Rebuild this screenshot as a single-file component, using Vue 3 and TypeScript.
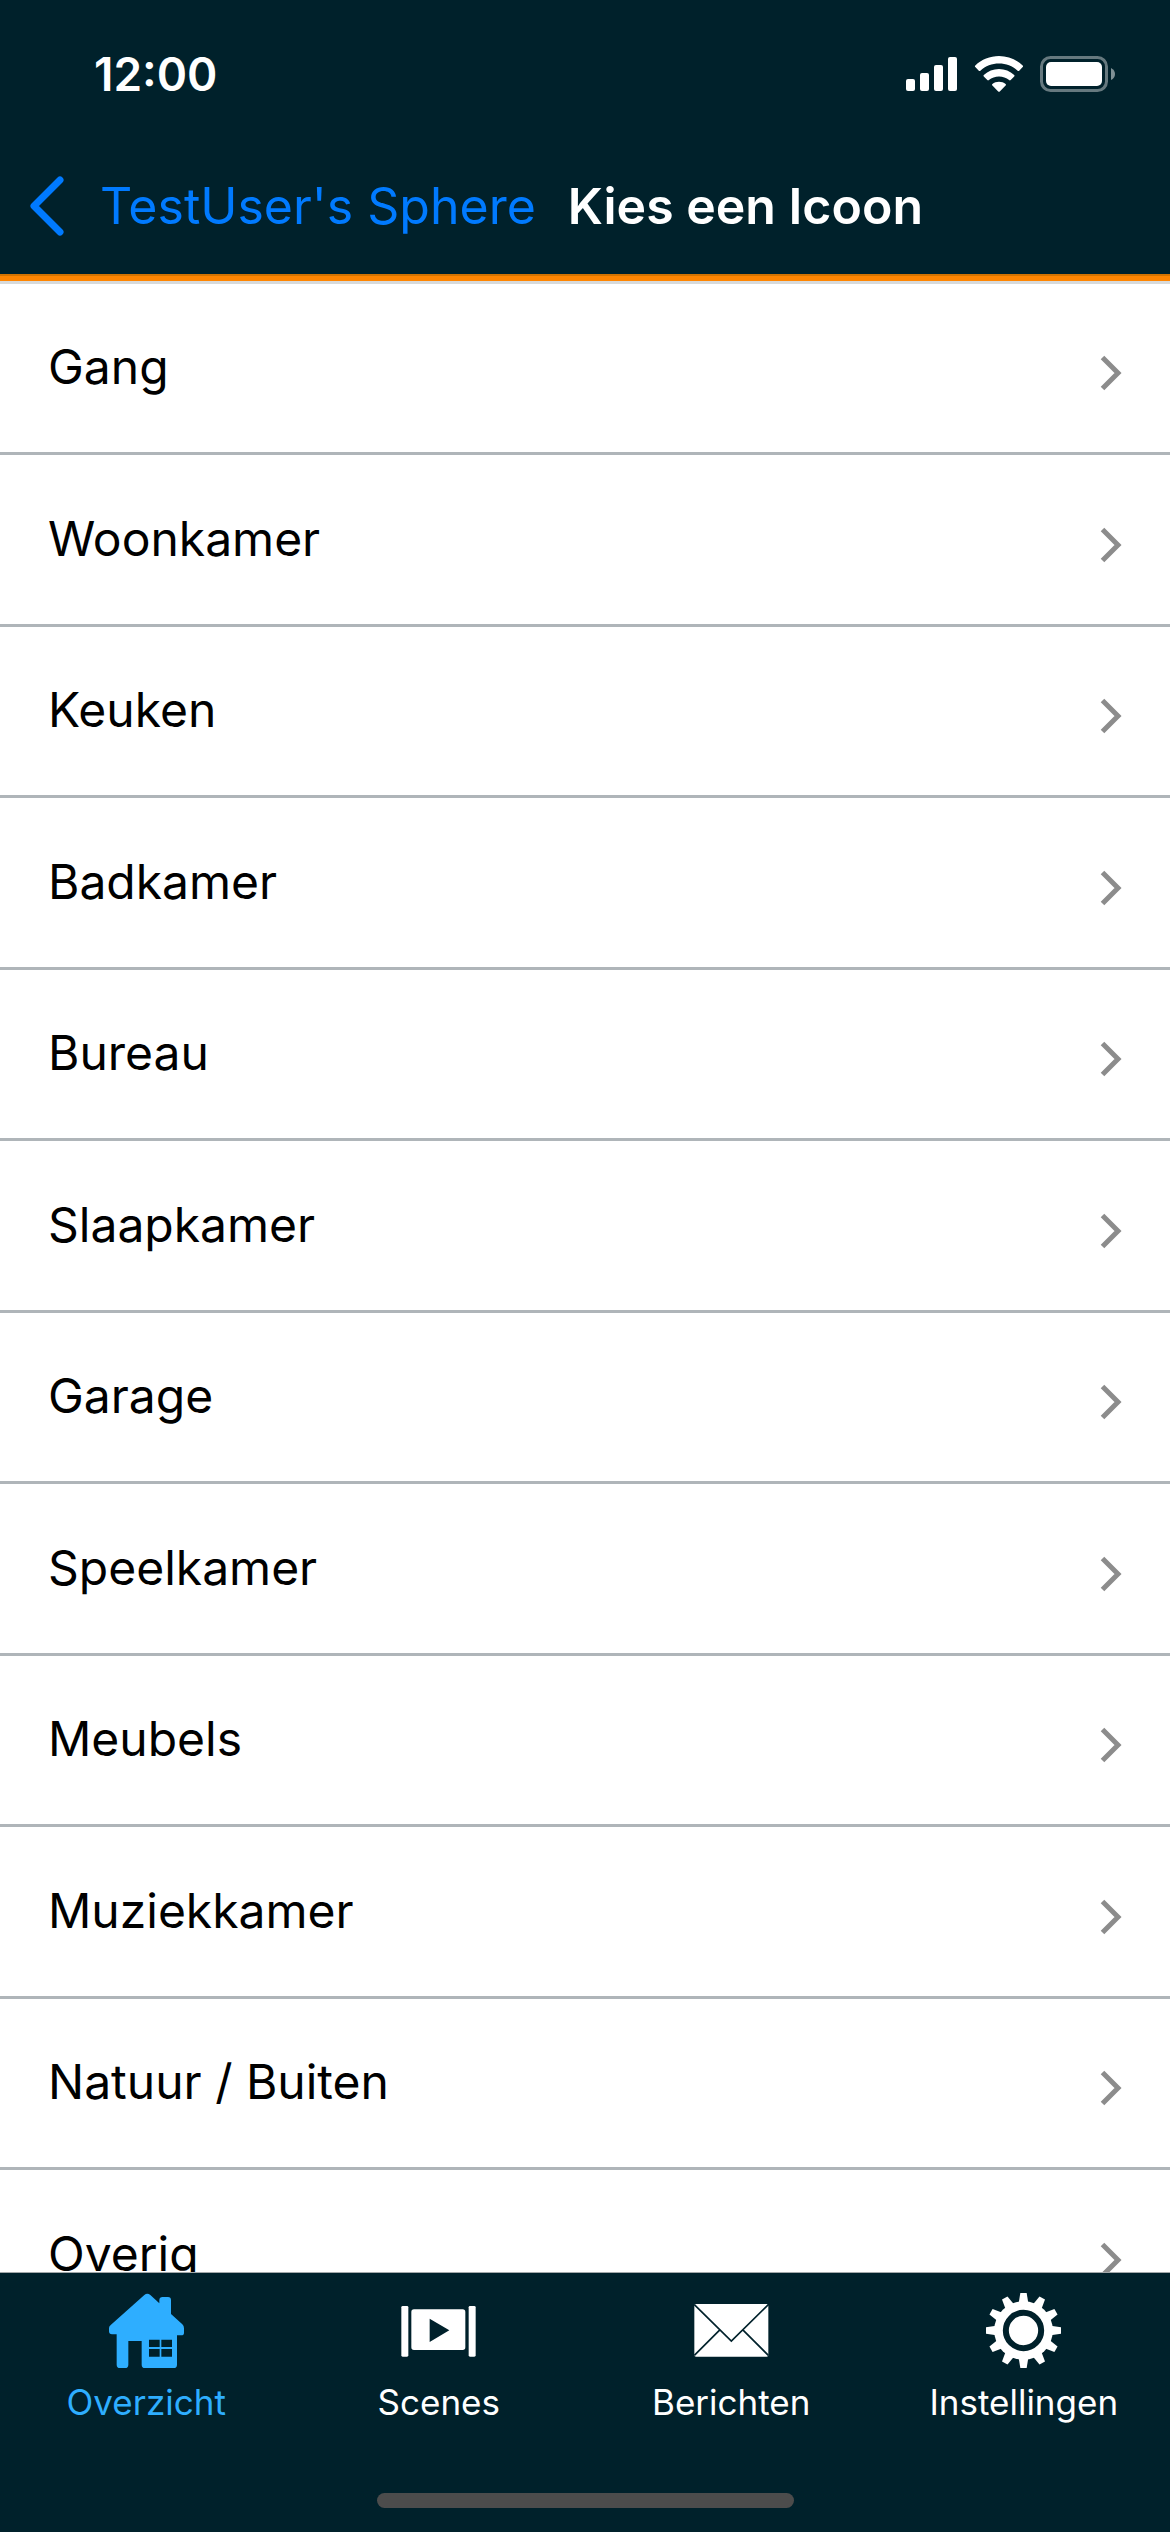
<script setup lang="ts">
import { ref } from 'vue'

type TabId = 'overview' | 'scenes' | 'messages' | 'settings'

interface Tab {
  id: TabId
  label: string
}

const categories: string[] = [
  'Gang',
  'Woonkamer',
  'Keuken',
  'Badkamer',
  'Bureau',
  'Slaapkamer',
  'Garage',
  'Speelkamer',
  'Meubels',
  'Muziekkamer',
  'Natuur / Buiten',
  'Overig',
]

const tabs: Tab[] = [
  { id: 'overview', label: 'Overzicht' },
  { id: 'scenes', label: 'Scenes' },
  { id: 'messages', label: 'Berichten' },
  { id: 'settings', label: 'Instellingen' },
]

const activeTab = ref<TabId>('overview')
const gearTeeth: number[] = Array.from({ length: 12 }, (_, i) => i * 30)
</script>

<template>
  <div class="app">
    <header class="header">
      <div class="status">
        <time class="clock">12:00</time>
        <div class="indicators">
          <svg width="52" height="36" viewBox="0 0 52 36" fill="#fff" aria-hidden="true">
            <rect x="0" y="23" width="9" height="12" rx="2" />
            <rect x="14" y="17" width="9" height="18" rx="2" />
            <rect x="28" y="9" width="9" height="26" rx="2" />
            <rect x="42" y="1" width="9" height="34" rx="2" />
          </svg>
          <svg width="50" height="36" viewBox="0 0 50 36" fill="#fff" aria-hidden="true">
            <path d="M25 0C34 0 42.500 3.500 48.700 9.500Q49.500 10.300 48.700 11.100L45.200 14.700Q44.400 15.400 43.600 14.700C38.500 10 32 7.500 25 7.500S11.500 10 6.400 14.700Q5.600 15.400 4.800 14.700L1.300 11.100Q0.500 10.300 1.300 9.500C7.500 3.500 16 0 25 0Z" />
            <path d="M25 13C30.800 13 36 15.200 40.200 19Q41 19.800 40.200 20.600L36.700 24.100Q35.900 24.800 35.100 24.100C32.300 21.700 28.800 20.400 25 20.400S17.700 21.700 14.900 24.100Q14.100 24.800 13.300 24.100L9.800 20.600Q9 19.800 9.800 19C14 15.200 19.200 13 25 13Z" />
            <path d="M25 25.700C27.500 25.700 29.800 26.500 31.600 28Q32.400 28.800 31.600 29.600L25.800 35.500Q25 36.200 24.200 35.500L18.400 29.600Q17.600 28.800 18.400 28C20.200 26.500 22.500 25.700 25 25.700Z" />
          </svg>
          <svg width="76" height="36" viewBox="0 0 76 36" aria-hidden="true">
            <rect x="1.500" y="1.500" width="65" height="33" rx="9" fill="none" stroke="#66797f" stroke-width="3" />
            <rect x="6" y="6" width="56" height="24" rx="5" fill="#fff" />
            <path d="M71 12Q75 14 75 18T71 24Z" fill="#7f9095" />
          </svg>
        </div>
      </div>
      <div class="navbar">
        <button class="back" type="button">
          <svg width="36" height="60" viewBox="0 0 36 60" aria-hidden="true">
            <path d="M32 4L6 30L32 56" fill="none" stroke="#007aff" stroke-width="7" stroke-linecap="round" stroke-linejoin="round" />
          </svg>
          <span>TestUser's Sphere</span>
        </button>
        <h1 class="title">Kies een Icoon</h1>
      </div>
    </header>

    <main class="content">
      <ul class="list">
        <li v-for="name in categories" :key="name" class="item">
          <button class="row" type="button">
            <span>{{ name }}</span>
            <svg class="chevron" width="22" height="36" viewBox="0 0 22 36" aria-hidden="true">
              <path d="M2.500 2.500L18 18L2.500 33.500" fill="none" stroke="#8c8c8c" stroke-width="5" />
            </svg>
          </button>
        </li>
      </ul>
    </main>

    <footer class="footer">
      <nav class="tabs">
        <a
          v-for="tab in tabs"
          :key="tab.id"
          href="#"
          class="tab"
          :class="{ active: tab.id === activeTab }"
          :aria-current="tab.id === activeTab ? 'page' : undefined"
          @click.prevent="activeTab = tab.id"
        >
          <svg v-if="tab.id === 'overview'" width="75" height="75" viewBox="87 99 225 225" fill="currentColor" aria-hidden="true">
            <path fill-rule="evenodd" d="M193 105Q202 98 211 105L238 130V121Q238 111 248 111H264Q273 111 273 120V162L307 193Q312 198 312 205V218Q312 226 304 226H291V314Q291 324 281 324H195Q185 324 185 314V243H145V314Q145 324 135 324H120Q110 324 110 314V223H96Q87 223 87 214V204Q87 198 93 194ZM207 239V261H239V239ZM244 239V261H276V239ZM207 267V290H239V267ZM244 267V290H276V267Z" />
          </svg>
          <svg v-else-if="tab.id === 'scenes'" width="75" height="75" viewBox="95 99 225 225" fill="currentColor" aria-hidden="true">
            <rect x="96" y="138" width="21" height="152" rx="4" />
            <rect x="298" y="138" width="21" height="152" rx="4" />
            <path fill-rule="evenodd" d="M134 148H280Q288 148 288 156V262Q288 270 280 270H134Q126 270 126 262V156Q126 148 134 148ZM181 176V246L240 211Z" />
          </svg>
          <svg v-else-if="tab.id === 'messages'" width="75" height="75" viewBox="131 99 225 225" aria-hidden="true">
            <rect x="132" y="132" width="222" height="158" rx="5" fill="currentColor" />
            <path d="M132 134L243 243L354 134M132 286L207 211M354 286L279 211" fill="none" stroke="#00212b" stroke-width="5" />
          </svg>
          <svg v-else width="75" height="75" viewBox="194 99 225 225" fill="currentColor" aria-hidden="true">
            <path v-for="angle in gearTeeth" :key="angle" d="M292 130L297 99H316L321 130Z" :transform="`rotate(${angle} 306.500 211.500)`" />
            <circle cx="306.500" cy="211.500" r="88" />
            <circle cx="306.500" cy="211.500" r="53" fill="none" stroke="#00212b" stroke-width="18" />
          </svg>
          <span class="label">{{ tab.label }}</span>
        </a>
      </nav>
      <div class="home-indicator"></div>
    </footer>
  </div>
</template>

<style>
body {
  margin: 0;
}
</style>

<style scoped>
.app {
  display: flex;
  flex-direction: column;
  height: 100vh;
  background: #fff;
  color: #000;
  font-family: Inter, "Liberation Sans", sans-serif;
}

button {
  margin: 0;
  border: 0;
  background: none;
  font: inherit;
  text-align: left;
  cursor: pointer;
}

svg {
  display: block;
  flex: none;
}

.header {
  flex: none;
  background: #00212b;
  color: #fff;
}

.header::after {
  content: "";
  display: block;
  height: 5px;
  border-top: 2px solid #d47300;
  background: #ff8500;
}

.status {
  display: flex;
  align-items: center;
  justify-content: space-between;
  height: 148px;
  padding: 0 54px 0 94px;
}

.clock {
  font-size: 46px;
  font-weight: 600;
}

.indicators {
  display: flex;
  align-items: center;
  gap: 16px;
}

.navbar {
  display: flex;
  align-items: center;
  gap: 32px;
  height: 116px;
  padding: 0 28px 10px;
  font-size: 50px;
  white-space: nowrap;
}

.back {
  display: flex;
  align-items: center;
  gap: 36px;
  padding: 0;
  color: #007aff;
}

.title {
  margin: 0;
  font-size: 50px;
  font-weight: 600;
}

.content {
  flex: 1;
  min-height: 0;
  overflow-y: auto;
  scrollbar-width: none;
}

.list {
  margin: 0;
  padding: 0;
  list-style: none;
  border-top: 3px solid #d7dadb;
}

.item {
  box-sizing: border-box;
  height: 172px;
  border-bottom: 3px solid #afb5b9;
}

.item:nth-child(odd) {
  height: 171px;
}

.row {
  display: flex;
  align-items: center;
  justify-content: space-between;
  width: 100%;
  height: 100%;
  padding: 0 48px 3px;
  font-size: 48px;
  color: #000;
}

.chevron {
  margin-top: 13px;
}

.footer {
  flex: none;
  padding-bottom: 24px;
  background: #00212b;
  border-top: 1px solid #a3a8aa;
}

.tabs {
  display: flex;
  height: 220px;
}

.tab {
  display: flex;
  flex: 1;
  flex-direction: column;
  align-items: center;
  gap: 14px;
  padding-top: 20px;
  color: #fff;
  text-decoration: none;
}

.tab.active {
  color: #2eaeff;
}

.label {
  font-size: 35px;
  line-height: 40px;
}

.home-indicator {
  width: 417px;
  max-width: 60%;
  height: 15px;
  margin: 0 auto;
  border-radius: 8px;
  background: #4c4c4c;
}
</style>
